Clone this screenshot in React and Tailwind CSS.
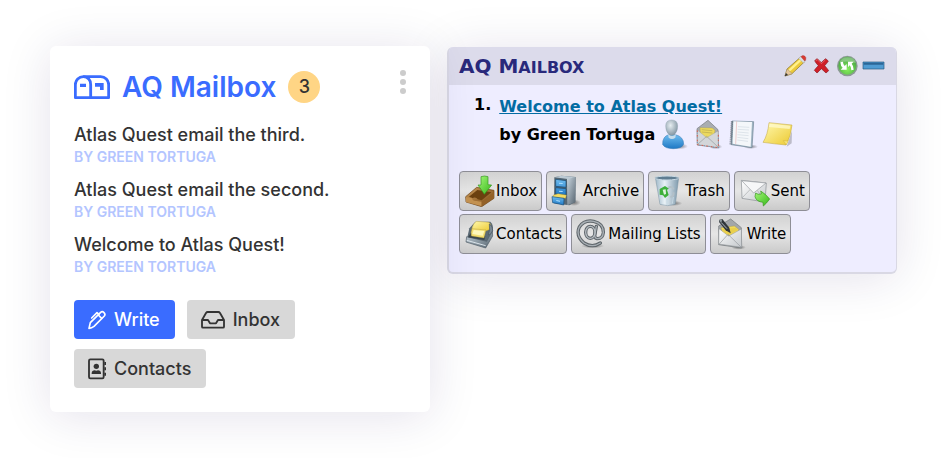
import React from "react";

function Art({ box, className, children }) {
  return (
    <svg viewBox={box} className={className} fill="none" aria-hidden="true">
      {children}
    </svg>
  );
}

function Gradients() {
  return (
    <svg width="0" height="0" className="absolute" aria-hidden="true">
      <defs>
        <linearGradient id="green" x1="0" y1="0" x2="1" y2="1">
          <stop offset="0" stopColor="#a5f77a" />
          <stop offset="1" stopColor="#35b818" />
        </linearGradient>
        <linearGradient id="steel" x1="0" y1="0" x2="1" y2="1">
          <stop offset="0" stopColor="#c9d6df" />
          <stop offset="1" stopColor="#56646f" />
        </linearGradient>
        <linearGradient id="paper" x1="0" y1="0" x2="1" y2="1">
          <stop offset="0" stopColor="#ffffff" />
          <stop offset="1" stopColor="#c4c8cc" />
        </linearGradient>
        <linearGradient id="yellow" x1="0" y1="0" x2="1" y2="1">
          <stop offset="0" stopColor="#fff9b0" />
          <stop offset="1" stopColor="#ecc92f" />
        </linearGradient>
        <linearGradient id="blue" x1="0" y1="0" x2="0" y2="1">
          <stop offset="0" stopColor="#6fbdf0" />
          <stop offset="1" stopColor="#1f78c4" />
        </linearGradient>
        <linearGradient id="wood" x1="0" y1="0" x2="1" y2="1">
          <stop offset="0" stopColor="#c99a58" />
          <stop offset="1" stopColor="#7a4a17" />
        </linearGradient>
        <linearGradient id="glass" x1="0" y1="0" x2="1" y2="0">
          <stop offset="0" stopColor="#9fb8c8" />
          <stop offset="0.4" stopColor="#e8f1f6" />
          <stop offset="1" stopColor="#7f9aad" />
        </linearGradient>
        <radialGradient id="orb" cx="0.5" cy="0.7" r="0.6">
          <stop offset="0" stopColor="#86f05c" />
          <stop offset="1" stopColor="#4da845" />
        </radialGradient>
        <radialGradient id="head" cx="0.4" cy="0.35" r="0.7">
          <stop offset="0" stopColor="#e6edf1" />
          <stop offset="1" stopColor="#7e929f" />
        </radialGradient>
        <radialGradient id="shade">
          <stop offset="0" stopColor="#000" stopOpacity="0.45" />
          <stop offset="1" stopColor="#000" stopOpacity="0" />
        </radialGradient>
      </defs>
    </svg>
  );
}

const MailboxIcon = () => (
  <Art box="102 114 108 81" className="h-[27px] w-9">
    <g stroke="#3a6cff" strokeWidth="8.5" strokeLinejoin="round">
      <path d="M106 146a24 24 0 0 1 24-24h52a24 24 0 0 1 24 24v39H106z" />
      <path d="M130 122a22 22 0 0 1 22 24v39" />
    </g>
    <path d="M120 143h18v10h-18zM165 141h26v21h-11v-10h-15z" fill="#3a6cff" />
  </Art>
);

const PenIcon = () => (
  <Art box="84 74 54 60" className="h-5 w-[18px]">
    <g stroke="#fff" strokeWidth="5" strokeLinejoin="round" strokeLinecap="round">
      <path d="M87 129l4-17 31-31q5-4 10 1t1 10l-31 31q-7 5-15 6z" />
      <path d="M115 89l10 10M95 98l16-16 6 5" />
    </g>
  </Art>
);

const TrayIcon = () => (
  <Art box="423 77 72 54" className="h-[18px] w-6">
    <g stroke="#333" strokeWidth="5.5" strokeLinejoin="round">
      <path d="M426 104l12-21q2-3 5-3h32q3 0 5 3l12 21v20q0 3-3 3h-60q-3 0-3-3z" />
      <path d="M427 104h17l6 10h18l6-10h17" />
    </g>
  </Art>
);

const AddressBookIcon = () => (
  <Art box="84 218 54 66" className="h-[22px] w-[18px]">
    <rect x="87" y="222" width="44" height="57" rx="4" stroke="#333" strokeWidth="5.5" />
    <path d="M133 230h5v9h-5zM133 246h5v9h-5zM133 262h5v9h-5z" fill="#333" />
    <circle cx="109" cy="243" r="8" fill="#333" />
    <path d="M95 266v-3q1-8 9-8 5 2 10 0 8 0 9 8v3z" fill="#333" />
  </Art>
);

const PencilIcon = () => (
  <Art box="405 45 72 72" className="size-6">
    <path d="M408 111l6-21 41-36 13 13-40 38z" fill="#ecca3c" stroke="#86712a" strokeWidth="2" />
    <path d="M418 92l39-36 5 5-40 37z" fill="#fff18b" />
    <path d="M408 111l6-20q8 2 8 7 6 1 7 6z" fill="#e4c59a" stroke="#8b7b62" />
    <path d="M407 112l4-10 6 6z" fill="#333" />
    <path d="M449 58l7-6 14 13-7 7z" fill="#d9dee2" stroke="#899299" />
    <path d="M456 53q5-6 11-2t3 12l-3 3z" fill="#d83a32" stroke="#a22a25" />
  </Art>
);

const DeleteIcon = () => (
  <Art box="483 45 72 72" className="size-6">
    <path
      d="M497 65l7-6q6 4 13 12 8-9 13-12l8 7q-5 8-11 14 8 9 12 15l-8 7-14-13q-8 9-13 13l-8-8q5-7 12-14-7-7-11-15z"
      fill="#cf1f28"
      stroke="#8d1820"
      strokeWidth="2"
      strokeLinejoin="round"
    />
    <path d="M500 66l5-4 12 12 12-11" stroke="#f0747a" strokeWidth="2" />
  </Art>
);

const RefreshIcon = () => (
  <Art box="561 45 72 72" className="size-6">
    <circle cx="595" cy="81" r="31" fill="#8b9a93" />
    <circle cx="595" cy="80" r="27" fill="url(#orb)" />
    <path d="M571 70q9-17 27-15 18 1 22 17-22-8-49-2z" fill="#fff" opacity="0.3" />
    <path d="M574 70q1 12 7 16l-6 6h18V75l-6 6q-5-4-5-13zM597 68h17l-6 6q6 7 6 18l-7 2q0-10-5-15l-5 6z" fill="#fff" />
  </Art>
);

const MinimizeIcon = () => (
  <Art box="639 45 72 72" className="size-6">
    <path d="M642 69h63v21h-63z" fill="#4f9bd2" stroke="#24577e" strokeWidth="2" />
    <path d="M644 71h59v6h-59z" fill="#2c6696" />
  </Art>
);

const PersonIcon = () => (
  <Art box="27 240 96 96" className="size-8">
    <ellipse cx="90" cy="322" rx="24" ry="9" fill="url(#shade)" />
    <path d="M38 316q-1-23 18-29h20q24 5 25 28-5 14-31 14t-32-13z" fill="url(#blue)" stroke="#2b73ae" strokeWidth="1.5" />
    <path d="M54 284q12 14 24 1l-2 11q-10 8-20 0z" fill="#c7dceb" />
    <path d="M47 261q0-18 18-18t18 18q0 16-9 25-9 7-18 0-9-9-9-25z" fill="url(#head)" stroke="#8799a5" strokeWidth="1" />
  </Art>
);

const OpenMailIcon = () => (
  <Art box="129 240 96 96" className="size-8">
    <ellipse cx="197" cy="323" rx="20" ry="8" fill="url(#shade)" />
    <path d="M141 269l33-25 30 28 2 54-64-8z" fill="#a9adb0" stroke="#74797d" strokeWidth="2" />
    <path d="M150 266l37 1 8 7-4 22-39 2z" fill="#ecd95e" stroke="#a5963d" />
    <path d="M155 272l32 3M155 279l32 3" stroke="#b6a74e" strokeWidth="2" />
    <path d="M142 273l28 23 34-20 2 50-64-9z" fill="#d3d6d9" stroke="#93989c" />
    <path d="M142 317l28-25 35 33" stroke="#96999c" strokeWidth="2" />
    <path d="M142 274v43l63 9v-48" stroke="#d06054" strokeWidth="3" strokeDasharray="5 9" />
    <path d="M142 281v36l63 9v-40" stroke="#4a86b8" strokeWidth="2" strokeDasharray="3 11" />
  </Art>
);

const NotebookIcon = () => (
  <Art box="231 240 96 96" className="size-8">
    <ellipse cx="302" cy="323" rx="22" ry="7" fill="url(#shade)" />
    <path d="M246 246l65 2-5 78-62-9z" fill="#9fb4c3" stroke="#6f8594" strokeWidth="2" />
    <path d="M250 247l56 2-4 74-54-9z" fill="#f4f7fa" />
    <path d="M260 247l-3 69" stroke="#e3a1a1" strokeWidth="1.5" />
    <path d="M264 263l34 2M263 271l34 2M263 279l33 3M262 287l34 3M262 295l33 4M262 303l32 4" stroke="#c6d0da" strokeWidth="1.5" />
    <path d="M246 248l-4 69" stroke="#424b52" strokeWidth="7" strokeDasharray="2 4" />
  </Art>
);

const NoteIcon = () => (
  <Art box="333 240 96 96" className="size-8">
    <path d="M346 315l64 8 16-48-1 38-15 10z" fill="#8c8c94" opacity="0.5" />
    <path d="M357 251l69 7q-3 33-18 60-34-3-69-8 14-22 18-59z" fill="url(#yellow)" stroke="#c1a43a" strokeWidth="1.5" />
    <path d="M408 318q-2-7-8-13 11 3 15-1-2 7-7 14z" fill="#fbe774" stroke="#b99d32" />
    <path d="M359 254l62 6-2 10-62-6z" fill="#fffbd2" opacity="0.7" />
  </Art>
);

const InboxArt = () => (
  <Art box="39 42 96 96" className="size-8">
    <path d="M47 107l33-28 52 9v24l-37 25-47-14z" fill="url(#wood)" stroke="#6d4316" strokeWidth="2" />
    <path d="M57 107l25-20 42 7-29 24-12-3q-3-7-13-5-3 2-4 0z" fill="#6b410f" />
    <path d="M48 108l18 4q2 9 13 8l16 2v14l-47-13z" fill="#c39251" />
    <path d="M95 122l37-28v18l-37 24z" fill="#936127" />
    <path d="M93 47q11-4 21 0v24l11 1-22 28-19-28h9z" fill="url(#green)" stroke="#34951e" strokeWidth="2" strokeLinejoin="round" />
  </Art>
);

const ArchiveArt = () => (
  <Art box="303 42 96 96" className="size-8">
    <ellipse cx="375" cy="125" rx="20" ry="10" fill="url(#shade)" />
    <path d="M316 49l21-5 43 4-1 75-18 10-46-6z" fill="#566773" />
    <path d="M354 52l26-4-1 75-24 10z" fill="url(#steel)" />
    <path d="M316 49l21-5 43 4-24 6z" fill="#bccad4" />
    <path d="M320 55l31 4v20l-31-3zM320 80l31 3v19l-31-3z" fill="url(#blue)" stroke="#17486f" strokeWidth="2" />
    <path d="M312 103l15-5 25 4-2 10-36-2z" fill="#f3dc62" stroke="#a08a2c" />
    <path d="M309 107l36 5-1 20-33-7z" fill="url(#blue)" stroke="#17507e" strokeWidth="2" />
    <path d="M330 65l11 1v3l-11-1zM330 89l11 1v3l-11-1zM322 117l11 2v3l-11-2z" fill="#aee0ff" />
  </Art>
);

const TrashArt = () => (
  <Art box="39 42 96 96" className="size-8">
    <ellipse cx="105" cy="127" rx="25" ry="8" fill="url(#shade)" />
    <path d="M49 49l70 1-10 80q-23 8-46 0z" fill="url(#glass)" stroke="#7891a1" strokeWidth="1.5" />
    <ellipse cx="84" cy="51" rx="35" ry="6" fill="#5f7d91" stroke="#c9dae4" strokeWidth="3" />
    <path d="M63 108l3 20M84 112v20M103 108l-3 20" stroke="#c4d7e2" strokeWidth="3" />
    <path d="M62 84l16-9 12 8-6 3 5 16-11 9-6-8-10-2z" fill="#3db03b" />
    <path d="M71 86l9-1 1 14-6 2z" fill="#dff3df" />
    <path d="M88 80q11-6 16 5M103 94q3 12-9 14" stroke="#b3c0c8" strokeWidth="6" />
  </Art>
);

const SentArt = () => (
  <Art box="294 42 96 96" className="size-8">
    <path d="M304 58l75 8-4 57-69-11z" fill="url(#paper)" stroke="#888e93" strokeWidth="2" />
    <path d="M306 111l25-26M374 121l-22-33" stroke="#a7abae" strokeWidth="2" />
    <path d="M305 59l36 37 37-30z" fill="#f6f7f8" stroke="#979ca0" strokeWidth="2" />
    <path d="M347 96q7 6 17 3l-2-9q15 9 27 24-9 13-19 21l-1-11q-20-2-24-17z" fill="url(#green)" stroke="#34951e" strokeWidth="2" strokeLinejoin="round" />
  </Art>
);

const ContactsArt = () => (
  <Art box="39 174 96 96" className="size-8">
    <path d="M58 205l18-20 45 0q9 8 8 24l-22 52-58-16z" fill="#5d6b75" />
    <path d="M50 230l60 14 17-32 1 16-21 36-59-18z" fill="url(#steel)" stroke="#4e5c66" strokeWidth="2" />
    <path d="M54 232l8-12 44 8-3 12z" fill="#39454e" />
    <path d="M79 184l38 3q8 6 5 20l-14 6-43-5q4-18 14-24z" fill="url(#yellow)" stroke="#a88e2f" />
    <path d="M66 206l42 4-6 24-38-6q-3-11 2-22z" fill="#f5df70" stroke="#a88e2f" />
    <path d="M71 210l32 3-5 14-31-5z" fill="#fff8bb" />
    <path d="M118 192q11 6 10 20-4 12-13 13 6-16 3-33z" fill="#7b8994" stroke="#47545e" strokeWidth="2" />
    <path d="M50 241l57 16" stroke="#dbe4ea" strokeWidth="3" />
  </Art>
);

const AtArt = () => (
  <Art box="372 174 96 96" className="size-8">
    <ellipse cx="425" cy="258" rx="35" ry="7" fill="url(#shade)" />
    <g strokeLinecap="round">
      <path d="M448 249q-24 16-49 0-26-22-14-48 14-22 43-17 30 7 29 34-2 19-19 18-9-2-6-15l4-22" stroke="#5f666b" strokeWidth="10" />
      <ellipse cx="418" cy="217" rx="14" ry="18" stroke="#5f666b" strokeWidth="10" />
      <path d="M448 249q-24 16-49 0-26-22-14-48 14-22 43-17 30 7 29 34-2 19-19 18-9-2-6-15l4-22" stroke="#a9b0b5" strokeWidth="4" />
      <ellipse cx="418" cy="217" rx="14" ry="18" stroke="#b5bcc1" strokeWidth="4" />
    </g>
  </Art>
);

const ComposeArt = () => (
  <Art box="216 174 96 96" className="size-8">
    <ellipse cx="290" cy="262" rx="22" ry="7" fill="url(#shade)" />
    <path d="M230 198l36-21 32 26 1 61-69-10z" fill="#a3a7aa" stroke="#73787c" strokeWidth="2" />
    <path d="M237 203l40-5 13 10-4 20-43-2z" fill="#f1db5c" stroke="#a6923b" />
    <path d="M231 206l29 22 38-21 1 55-69-10z" fill="url(#paper)" stroke="#8c9195" strokeWidth="1.5" />
    <path d="M240 212l20 13 28-15-6-6-40 2z" fill="#e9cf4c" />
    <path d="M231 253l27-30 40 39" stroke="#94999d" strokeWidth="2" />
    <path d="M231 180l10-3 21 26 4 17-15-9-20-25z" fill="#31373b" />
    <path d="M237 187l18 19" stroke="#aeb8be" strokeWidth="3" />
    <circle cx="236" cy="182" r="4" fill="#8f999f" />
  </Art>
);

const messages = [
  "Atlas Quest email the third.",
  "Atlas Quest email the second.",
  "Welcome to Atlas Quest!",
];

const folders = [
  ["Inbox", InboxArt],
  ["Archive", ArchiveArt],
  ["Trash", TrashArt],
  ["Sent", SentArt],
  ["Contacts", ContactsArt],
  ["Mailing Lists", AtArt],
  ["Write", ComposeArt],
];

const headerTools = [
  ["Edit", PencilIcon],
  ["Delete", DeleteIcon],
  ["Refresh", RefreshIcon],
  ["Minimize", MinimizeIcon],
];

const messageTools = [
  ["Profile", PersonIcon],
  ["Mail", OpenMailIcon],
  ["Logbook", NotebookIcon],
  ["Note", NoteIcon],
];

function ModernButton({ icon, label, primary }) {
  return (
    <button
      type="button"
      className={
        "flex h-[39px] items-center gap-2 rounded-[4px] pr-[15px] pl-3.5 text-lg font-medium " +
        (primary ? "bg-[#3a6cff] text-white" : "bg-[#d8d8d8] text-[#333]")
      }
    >
      {icon}
      {label}
    </button>
  );
}

function ModernMailbox() {
  return (
    <section className="relative z-10 rounded-md bg-white p-6 font-['Inter',sans-serif] text-[#333] shadow-[0_4px_50px_rgba(30,20,90,0.12)]">
      <header className="flex items-start justify-between">
        <div className="flex h-[34px] items-center gap-3">
          <MailboxIcon />
          <h2 className="text-[28px] leading-8 font-semibold text-[#3a6cff]">AQ Mailbox</h2>
          <span className="flex size-8 items-center justify-center rounded-full bg-[#ffd585] text-lg font-medium">3</span>
        </div>
        <button type="button" aria-label="More" className="flex flex-col gap-[3px]">
          <span className="size-1.5 rounded-full bg-[#ccc]" />
          <span className="size-1.5 rounded-full bg-[#ccc]" />
          <span className="size-1.5 rounded-full bg-[#ccc]" />
        </button>
      </header>
      <ul className="mt-[19px] flex flex-col gap-[11px]">
        {messages.map((m) => (
          <li key={m}>
            <p className="text-lg leading-6 font-medium">{m}</p>
            <p className="text-sm leading-5 font-semibold text-[#b3c5ff] uppercase">by Green Tortuga</p>
          </li>
        ))}
      </ul>
      <div className="mt-[23px] flex flex-wrap gap-x-3 gap-y-2.5 pr-20">
        <ModernButton primary icon={<PenIcon />} label="Write" />
        <ModernButton icon={<TrayIcon />} label="Inbox" />
        <ModernButton icon={<AddressBookIcon />} label="Contacts" />
      </div>
    </section>
  );
}

function ClassicMailbox() {
  return (
    <section className="mt-px overflow-hidden rounded-md border-r border-b-2 border-l-2 border-[#d9d8e4] bg-[#eeedff] font-['DejaVu_Sans',sans-serif] text-black shadow-[0_4px_50px_rgba(30,20,90,0.12)]">
      <header className="flex h-[38px] items-center justify-between bg-[#dcdbeb] px-2.5">
        <h2 className="text-xl font-bold text-[#29297b]">
          AQ M<span className="text-base uppercase">ailbox</span>
        </h2>
        <div className="flex gap-0.5">
          {headerTools.map(([label, Icon]) => (
            <button key={label} type="button" aria-label={label}>
              <Icon />
            </button>
          ))}
        </div>
      </header>
      <ol className="pt-2.5 pl-[25px] text-base font-bold">
        <li className="flex gap-2">
          <span className="leading-5">1.</span>
          <div>
            <a href="#welcome" className="block leading-6 text-[#036ca3] underline">
              Welcome to Atlas Quest!
            </a>
            <div className="flex items-center gap-1">
              <span>by Green Tortuga</span>
              <div className="flex gap-0.5">
                {messageTools.map(([label, Icon]) => (
                  <button key={label} type="button" aria-label={label}>
                    <Icon />
                  </button>
                ))}
              </div>
            </div>
          </div>
        </li>
      </ol>
      <div className="flex flex-wrap gap-x-1 gap-y-[3px] px-2.5 pt-5 pb-[18px]">
        {folders.map(([label, Icon]) => (
          <button
            key={label}
            type="button"
            className="flex h-10 items-center gap-px rounded-[4px] border border-[#8e8e96] bg-linear-to-b from-[#d2d2d2] via-[#e6e6e6] to-[#cacaca] pr-1 pl-[3px] text-[15px]"
          >
            <Icon />
            {label}
          </button>
        ))}
      </div>
    </section>
  );
}

export default function App() {
  return (
    <main className="grid grid-cols-[380fr_450fr] items-start gap-[17px] px-[50px] py-[46px]">
      <Gradients />
      <ModernMailbox />
      <ClassicMailbox />
    </main>
  );
}
